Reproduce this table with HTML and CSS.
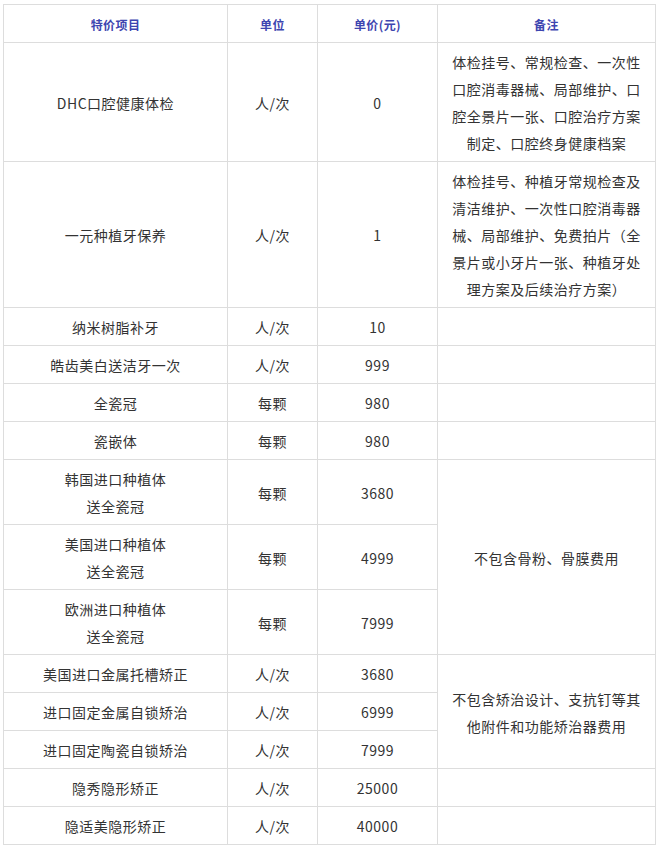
FILE: index.html
```html
<!DOCTYPE html>
<html lang="zh-CN">
<head>
<meta charset="utf-8">
<title>特价项目</title>
<link rel="stylesheet" href="styles.css">
</head>
<body>
<table class="price">
  <colgroup>
    <col class="c1"><col class="c2"><col class="c3"><col class="c4">
  </colgroup>
  <thead>
    <tr><th>特价项目</th><th>单位</th><th>单价(元)</th><th>备注</th></tr>
  </thead>
  <tbody>
    <tr><td>DHC口腔健康体检</td><td>人/次</td><td>0</td><td>体检挂号、常规检查、一次性口腔消毒器械、局部维护、口腔全景片一张、口腔治疗方案制定、口腔终身健康档案</td></tr>
    <tr><td>一元种植牙保养</td><td>人/次</td><td>1</td><td>体检挂号、种植牙常规检查及清洁维护、一次性口腔消毒器械、局部维护、免费拍片（全景片或小牙片一张、种植牙处理方案及后续治疗方案）</td></tr>
    <tr><td>纳米树脂补牙</td><td>人/次</td><td>10</td><td></td></tr>
    <tr><td>皓齿美白送洁牙一次</td><td>人/次</td><td>999</td><td></td></tr>
    <tr><td>全瓷冠</td><td>每颗</td><td>980</td><td></td></tr>
    <tr><td>瓷嵌体</td><td>每颗</td><td>980</td><td></td></tr>
    <tr><td>韩国进口种植体<br>送全瓷冠</td><td>每颗</td><td>3680</td><td rowspan="3">不包含骨粉、骨膜费用</td></tr>
    <tr><td>美国进口种植体<br>送全瓷冠</td><td>每颗</td><td>4999</td></tr>
    <tr><td>欧洲进口种植体<br>送全瓷冠</td><td>每颗</td><td>7999</td></tr>
    <tr><td>美国进口金属托槽矫正</td><td>人/次</td><td>3680</td><td rowspan="3">不包含矫治设计、支抗钉等其他附件和功能矫治器费用</td></tr>
    <tr><td>进口固定金属自锁矫治</td><td>人/次</td><td>6999</td></tr>
    <tr><td>进口固定陶瓷自锁矫治</td><td>人/次</td><td>7999</td></tr>
    <tr><td>隐秀隐形矫正</td><td>人/次</td><td>25000</td><td></td></tr>
    <tr><td>隐适美隐形矫正</td><td>人/次</td><td>40000</td><td></td></tr>
  </tbody>
</table>
</body>
</html>
```

FILE: styles.css
```css
html, body {
  margin: 0;
  padding: 0;
  background: #ffffff;
}
body {
  font-family: "Noto Sans CJK SC", "Noto Sans", sans-serif;
  color: #333333;
}
.price {
  margin: 4px 0 0 3px;
  border-collapse: collapse;
  table-layout: fixed;
  width: 652px;
}
.c1 { width: 224px; }
.c2 { width: 90px; }
.c3 { width: 120px; }
.c4 { width: 218px; }
.price th,
.price td {
  border: 1px solid #dddddd;
  padding: 6px 10px 4px;
  text-align: center;
  vertical-align: middle;
  line-height: 27px;
}
.price th {
  font-size: 12px;
  font-weight: bold;
  color: #3d45b0;
  letter-spacing: 0.4px;
}
.price td {
  font-size: 14px;
  letter-spacing: 0.5px;
}
```
